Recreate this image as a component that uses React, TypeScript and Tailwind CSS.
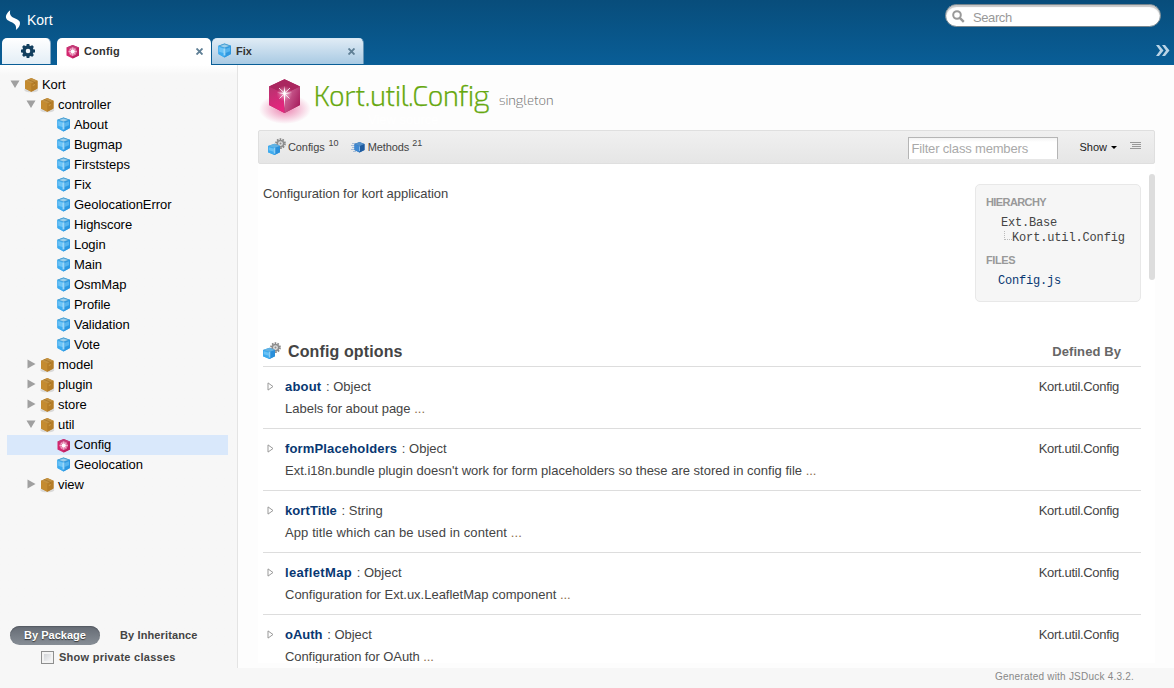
import React from "react";

function BlueCube({ className = "" }: { className?: string }) {
  return (
    <svg className={"shrink-0 " + className} width="14" height="15" viewBox="0 0 14 15">
      <path d="M6.500.6 13 2.800V11L6.500 14.400.4 11V2.800z" fill="#3aa5ea" />
      <path d="M6.500.6 13 2.800 6.500 5.200.4 2.800z" fill="#4c9fd0" />
      <path d="M6.500 1.400 11 2.900 6.500 4.500 2.200 2.900z" fill="#9ccfec" />
      <path d="M.4 2.800 6.500 5.200v9.200L.4 11z" fill="#3eacf0" />
      <path d="M1.200 4.100 6 5.800v4.400L1.200 8.800z" fill="#6cc4f7" />
      <path d="M6.500 5.200 13 2.800V11L6.500 14.400z" fill="#2f98e0" />
      <path d="M7.500 6 12 4.300v4L7.500 9.900z" fill="#56b4ee" />
      <path d="M5.600 5.400 7.400 5.200v7.400L5.600 12.600z" fill="#b5e4fb" opacity=".8" />
    </svg>
  );
}

function PinkCube() {
  return (
    <svg className="shrink-0" width="14" height="15" viewBox="0 0 14 15">
      <path d="M6.700 1 13 3.600V11.400L6.700 14.400.5 11.400V3.600z" fill="#d3266f" />
      <path d="M6.700 1 13 3.600 6.700 6.600.5 3.600z" fill="#c23a76" />
      <path d="M6.700 6.600 13 3.600v7.800L6.700 14.400z" fill="#bd2364" />
      <circle cx="6.700" cy="7.600" r="4.200" fill="#f7a9cb" opacity=".6" />
      <path d="M6.700 3.400v8.400M2.500 7.600h8.400M4.100 5l5.200 5.200M9.300 5L4.100 10.200" stroke="#fff" strokeWidth=".6" opacity=".8" />
      <circle cx="6.700" cy="7.600" r="2" fill="#fff" />
    </svg>
  );
}

function BrownBox() {
  return (
    <svg className="shrink-0" width="15" height="16" viewBox="0 0 15 16">
      <ellipse cx="7.300" cy="13" rx="7" ry="2.300" fill="#000" opacity=".12" />
      <path d="M7.300 1 13.500 3.800v7.700L7.300 14.800 1 11.500V3.800z" fill="#bd8630" />
      <path d="M7.300 1 13.500 3.800 7.300 6.600 1 3.800z" fill="#c39141" />
      <path d="M1 3.800l6.300 2.800v8.200L1 11.500z" fill="#c48b30" />
      <path d="M7.300 6.600 13.500 3.800v7.700L7.300 14.800z" fill="#b57d28" />
      <path d="M4.200 2.500 10.500 5.300v1.500" fill="none" stroke="#a27328" strokeWidth=".7" />
      <path d="M8.800 8.500l2-.9" stroke="#d8a956" strokeWidth=".8" />
    </svg>
  );
}

function ConfigIcon() {
  return (
    <svg className="shrink-0" width="18" height="18" viewBox="0 0 18 18">
      <circle cx="12.500" cy="5.600" r="4.500" fill="none" stroke="#858585" strokeWidth="1.700" strokeDasharray="1.600 1.230" />
      <circle cx="12.500" cy="5.600" r="3.200" fill="#dedede" stroke="#8c8c8c" strokeWidth="1.500" />
      <circle cx="12.500" cy="5.600" r="1" fill="#8b8b8b" />
      <path d="M0 8 6.500 5.800 12 8V14.300L6.500 17 0 14.300z" fill="#38a3e8" />
      <path d="M0 8 6.500 5.800 12 8 6.500 10z" fill="#62b2e2" />
      <path d="M0 8l6.500 2V17L0 14.300z" fill="#3fabee" />
      <path d="M.8 9.200l5 1.500v3.100L.8 12.300z" fill="#69c2f6" />
      <path d="M6.500 10 12 8V14.300L6.500 17z" fill="#2a8fda" />
      <path d="M5.800 10l1.500-.2v5.900l-1.500-.1z" fill="#a5dcf9" opacity=".8" />
    </svg>
  );
}

function MethodIcon() {
  return (
    <svg className="shrink-0" width="14" height="13" viewBox="0 0 14 13">
      <path d="M1 2.500h4M0 4.500h4M1 6.500h4M0 8.500h4M2 10.500h3" stroke="#a7bdd8" />
      <path d="M8.500 1 13.500 3v6L8.500 11.500 3.500 9V3z" fill="#2e72b9" />
      <path d="M8.500 1 13.500 3 8.500 5.200 3.500 3z" fill="#5590c9" />
      <path d="M3.500 3l5 2.200v6.300L3.500 9z" fill="#3f89d2" />
      <path d="M8.500 5.200 13.500 3v6L8.500 11.500z" fill="#205c9f" />
      <path d="M8 5.500l1-.3v4.800l-1 .2z" fill="#83b6e6" />
    </svg>
  );
}

function BigPinkCube() {
  return (
    <svg className="shrink-0" width="54" height="46" viewBox="0 0 54 46">
      <defs>
        <radialGradient id="glow"><stop offset="0" stopColor="#e0307c" stopOpacity=".6" /><stop offset="1" stopColor="#e0307c" stopOpacity="0" /></radialGradient>
        <linearGradient id="left" x1="0" y1="0" x2=".3" y2="1"><stop offset="0" stopColor="#b5336e" /><stop offset="1" stopColor="#e6257f" /></linearGradient>
        <linearGradient id="right" x1="0" y1="0" x2="1" y2=".7"><stop offset="0" stopColor="#d778a6" /><stop offset="1" stopColor="#a71c5c" /></linearGradient>
        <radialGradient id="shine"><stop offset="0" stopColor="#fff" stopOpacity=".75" /><stop offset="1" stopColor="#f49bc2" stopOpacity="0" /></radialGradient>
      </defs>
      <ellipse cx="27" cy="31" rx="26" ry="15" fill="url(#glow)" />
      <path d="M26.500 1.300 42 8.500V27L26.500 35 11 27V8.500z" fill="#b3245f" />
      <path d="M11 8.500l15.500 7.300V35L11 27z" fill="url(#left)" />
      <path d="M26.500 15.800 42 8.500V27L26.500 35z" fill="url(#right)" />
      <path d="M26.500 1.300 42 8.500l-15.500 7.300L11 8.500z" fill="#aa265f" />
      <circle cx="26.500" cy="15.500" r="8" fill="url(#shine)" />
      <path d="M26.500 8l.8 6.700h6.700l-6.700 1.400-.8 14-.8-14-6.700-1.400h6.700z" fill="#fff" />
      <path d="M21 10l5 4.700M32 10l-5 4.700M21.500 20.500l4.500-4.300M31.500 20.500l-4.500-4.300" stroke="#fff" strokeWidth=".8" />
    </svg>
  );
}

type NodeKind = "open" | "closed" | "class" | "singleton";
const tree: { label: string; depth: number; kind: NodeKind; active?: boolean }[] = [
  { label: "Kort", depth: 0, kind: "open" },
  { label: "controller", depth: 1, kind: "open" },
  { label: "About", depth: 2, kind: "class" },
  { label: "Bugmap", depth: 2, kind: "class" },
  { label: "Firststeps", depth: 2, kind: "class" },
  { label: "Fix", depth: 2, kind: "class" },
  { label: "GeolocationError", depth: 2, kind: "class" },
  { label: "Highscore", depth: 2, kind: "class" },
  { label: "Login", depth: 2, kind: "class" },
  { label: "Main", depth: 2, kind: "class" },
  { label: "OsmMap", depth: 2, kind: "class" },
  { label: "Profile", depth: 2, kind: "class" },
  { label: "Validation", depth: 2, kind: "class" },
  { label: "Vote", depth: 2, kind: "class" },
  { label: "model", depth: 1, kind: "closed" },
  { label: "plugin", depth: 1, kind: "closed" },
  { label: "store", depth: 1, kind: "closed" },
  { label: "util", depth: 1, kind: "open" },
  { label: "Config", depth: 2, kind: "singleton", active: true },
  { label: "Geolocation", depth: 2, kind: "class" },
  { label: "view", depth: 1, kind: "closed" },
];

const indents = ["pl-[3px]", "pl-[19px]", "pl-[49px]"];

function TreeRow({ label, depth, kind, active }: (typeof tree)[number]) {
  const folder = kind === "open" || kind === "closed";
  return (
    <div className={`flex h-5 items-center ${indents[depth]} ${active ? "bg-[#d9e8fb]" : ""}`}>
      {folder && (
        <svg className="-mt-[2px] mr-[4px] shrink-0" width="10" height="10" viewBox="0 0 10 10">
          <path d={kind === "open" ? "M.5 1.500h9L5 9z" : "M1.500 .5v9L9.500 5z"} fill="#a0a0a0" />
        </svg>
      )}
      {folder ? <BrownBox /> : kind === "class" ? <BlueCube className="ml-[1px] -mt-px" /> : <span className="ml-[1px]"><PinkCube /></span>}
      <span className={`${depth === 2 ? "ml-[3px]" : "ml-[3px]"} text-[13px] leading-5 tracking-[-0.050px] whitespace-nowrap text-black`}>{label}</span>
    </div>
  );
}

const members = [
  { name: "about", type: "Object", text: "Labels for about page", nameSpacing: "tracking-[0.2px]", textSpacing: "tracking-[-0.010px]" },
  { name: "formPlaceholders", type: "Object", text: "Ext.i18n.bundle plugin doesn't work for form placeholders so these are stored in config file", nameSpacing: "tracking-[0.15px]", textSpacing: "tracking-[0px]" },
  { name: "kortTitle", type: "String", text: "App title which can be used in content", nameSpacing: "tracking-[0.1px]", textSpacing: "tracking-[0.1px]" },
  { name: "leafletMap", type: "Object", text: "Configuration for Ext.ux.LeafletMap component", nameSpacing: "tracking-[0.35px]", textSpacing: "tracking-[-0.010px]" },
  { name: "oAuth", type: "Object", text: "Configuration for OAuth", nameSpacing: "tracking-[0px]", textSpacing: "tracking-[-0.080px]" },
];

function CloseMark() {
  return (
    <svg width="7" height="7" viewBox="0 0 7 7">
      <path d="M.5.5l6 6M6.500.5l-6 6" stroke="#5f7f95" strokeWidth="1.900" />
    </svg>
  );
}

export default function App() {
  return (
    <div className="flex h-[688px] w-[1174px] flex-col overflow-hidden bg-[#f7f7f7] font-['Liberation_Sans',Arial,sans-serif] text-[#444]">
      <header className="flex h-[65px] shrink-0 flex-col bg-linear-to-b from-[#084d7b] to-[#095e97]">
        <div className="flex h-[38px] items-start">
          <svg className="mt-[10px] ml-[5px]" width="16" height="21" viewBox="0 0 16 21">
            <path d="M5.200.3C1.800 3 .2 6.200 1.300 8.600c1.200 2.700 5.800 3.400 8.100 5.400 1.700 1.500 2 3.500 1.500 6 3.300-2.300 4.900-5.800 3.700-8.400-1.100-2.500-5.100-3-7.500-4.700C4.900 5.300 4.600 3 5.200.3z" fill="#fff" />
          </svg>
          <span className="mt-[11px] ml-[6px] text-[14px] leading-[18px] text-white">Kort</span>
          <div className="mt-1 mr-[13px] ml-auto flex h-[23px] w-[216px] items-center rounded-full border border-[#77868f] bg-white pl-[6px] shadow-[inset_0_2px_1px_#c8c8c8]">
            <svg className="mt-px" width="13" height="13" viewBox="0 0 13 13">
              <circle cx="5" cy="5" r="3.800" fill="none" stroke="#999" strokeWidth="2" />
              <path d="M7.800 7.800l4 4" stroke="#999" strokeWidth="2.400" />
            </svg>
            <span className="mt-[4px] ml-[8px] text-[13px] tracking-[-0.400px] text-[#999]">Search</span>
          </div>
        </div>
        <div className="flex h-[27px] items-start">
          <div className="ml-[2px] flex h-[26px] w-[49px] items-center justify-center rounded-t-[5px] border-r border-[#86a9c4] bg-linear-to-b from-white to-[#e3eef6] pl-[4px]">
            <svg width="14" height="14" viewBox="-7 -7 14 14">
              <circle r="4" fill="none" stroke="#123f5e" strokeWidth="3.400" />
              <path d="M0-7V-4M0 4V7M-7 0H-4M4 0H7M-5-5L-3-3M3 3L5 5M-5 5L-3 3M3-3L5-5" stroke="#123f5e" strokeWidth="2.800" />
            </svg>
          </div>
          <div className="ml-[6px] flex h-[27px] w-[154px] items-center rounded-t-[5px] bg-white pr-[8px] pl-[9px]">
            <PinkCube />
            <span className="ml-[4px] text-[11px] font-bold tracking-[0.2px] text-[#333]">Config</span>
            <span className="ml-auto"><CloseMark /></span>
          </div>
          <div className="ml-px flex h-[26px] w-[152px] items-center rounded-t-[5px] border-t border-r border-[#d8e8f4] border-r-[#6594b5] bg-linear-to-b from-[#dfebf5] to-[#a9cae3] pr-[8px] pl-[6px]">
            <BlueCube className="-mt-[2px]" />
            <span className="ml-[4px] text-[11px] font-bold text-[#333]">Fix</span>
            <span className="ml-auto"><CloseMark /></span>
          </div>
          <svg className="mt-[7px] mr-[4px] ml-auto" width="14" height="11" viewBox="0 0 14 11">
            <path d="M0 0h3l4.500 5.500L3 11H0l4-5.500zM6 0h3l4.500 5.500L9 11H6l4-5.500z" fill="#bad4e6" />
          </svg>
        </div>
      </header>
      <div className="flex h-[603px] shrink-0">
        <aside className="flex w-[238px] shrink-0 flex-col border-r border-[#e4e4e4] bg-linear-to-b from-white to-[#f7f7f7] to-[10px] pt-[10px]">
          <nav className="ml-[7px] w-[221px]">
            {tree.map((n, i) => <TreeRow key={i} {...n} />)}
          </nav>
          <div className="mt-[131px] ml-[10px] flex items-center text-[11px] leading-[19px] font-bold">
            <span className="h-[19px] w-[90px] rounded-full bg-linear-to-b from-[#656b74] to-[#878e96] text-center text-white shadow-[inset_0_1px_1px_#565b63] [text-shadow:0_1px_1px_#333]">By Package</span>
            <span className="ml-[20px] tracking-[0.120px]">By Inheritance</span>
          </div>
          <div className="mt-[4px] ml-[41px] flex items-center text-[11px] leading-[16px] font-bold">
            <span className="size-[13px] border border-[#8e8f8f] bg-linear-to-br from-[#c8cbcf] to-white shadow-[inset_0_0_0_2px_#f3f3f3]" />
            <span className="ml-[5px] tracking-[0.270px]">Show private classes</span>
          </div>
        </aside>
        <main className="flex flex-1 flex-col bg-[#fdfdfd] pl-[20px]">
          <div className="relative flex h-[65px]">
            <div className="mt-[13px]"><BigPinkCube /></div>
            <h1 className="mt-[14px] ml-[2px] font-['Exo','Open_Sans',sans-serif] text-[27px] leading-[36px] font-light tracking-[-0.240px] whitespace-nowrap text-[#66a80f] [-webkit-text-stroke:0.250px_#66a80f]">Kort.util.Config</h1>
            <span className="mt-[27px] ml-[10px] font-['Exo','Open_Sans',sans-serif] text-[13px] leading-[18px] font-light tracking-[-0.060px] text-[#777]">singleton</span>
            <span className="absolute top-[47px] left-[110px] text-[13px] leading-4 text-white">View source</span>
          </div>
          <div className="flex h-[34px] w-[897px] items-center rounded-[2px] border border-[#dfdfdf] bg-linear-to-b from-[#f0f0f0] to-[#e6e6e6] pl-[9px] text-[11px]">
            <ConfigIcon />
            <span className="ml-[2px] tracking-[-0.100px]">Configs</span>
            <span className="-mt-[6px] ml-[4px] text-[9px]">10</span>
            <span className="ml-[12px]"><MethodIcon /></span>
            <span className="ml-[3px] tracking-[-0.100px]">Methods</span>
            <span className="-mt-[6px] ml-[3px] text-[9px]">21</span>
            <div className="mt-[2px] mr-[21px] ml-auto h-[22px] w-[150px] border border-b-0 border-[#b5b5b5] bg-linear-to-b from-[#f3f3f3] to-white to-[4px] pl-[2px] text-[13px] leading-[22px] tracking-[-0.170px] whitespace-nowrap text-[#a9a9a9]">Filter class members</div>
            <span className="text-[#222]">Show</span>
            <svg className="mt-px ml-[4px]" width="6" height="3" viewBox="0 0 6 3"><path d="M0 0h6L3 3z" fill="#000" /></svg>
            <svg className="-mt-[3px] mr-[12px] ml-[13px]" width="12" height="7" viewBox="0 0 12 7">
              <path d="M0 .5h11M2 2.500h9M2 4.500h9M0 6.500h11" stroke="#999" />
            </svg>
          </div>
          <div className="flex h-[499px] w-[897px] overflow-hidden bg-white pl-[5px]">
            <div className="w-[878px] shrink-0">
              <div className="flex h-[166px] justify-between pt-[20px]">
                <p className="text-[13px] leading-[20px] tracking-[-0.060px]">Configuration for kort application</p>
                <div className="flex h-[118px] w-[166px] flex-col rounded-[5px] border border-[#e8e8e8] bg-[#f6f6f6] pl-[10px]">
                  <h4 className="mt-[10px] text-[11px] leading-[15px] font-bold tracking-[-0.600px] text-[#999]">HIERARCHY</h4>
                  <div className="mt-[6px] ml-[15px] font-['Courier_New','Liberation_Mono',monospace] text-[12px] leading-[15px] tracking-[-0.200px]">Ext.Base</div>
                  <div className="ml-[18px] flex font-['Courier_New','Liberation_Mono',monospace] text-[12px] leading-[15px] tracking-[-0.150px] whitespace-nowrap">
                    <span className="h-[9px] w-[8px] border-b border-l border-dotted border-[#bbb]" />
                    Kort.util.Config
                  </div>
                  <h4 className="mt-[7px] text-[11px] leading-[15px] font-bold tracking-[-0.400px] text-[#999]">FILES</h4>
                  <div className="mt-[6px] ml-[12px] font-['Courier_New','Liberation_Mono',monospace] text-[12px] leading-[15px] tracking-[-0.200px] text-[#083772]">Config.js</div>
                </div>
              </div>
              <div className="flex h-[37px] items-center border-b border-[#ddd] pt-[7px] pr-[20px]">
                <span className="-mt-[2px]"><ConfigIcon /></span>
                <h3 className="ml-[7px] text-[16px] leading-[20px] font-bold tracking-[0.120px]">Config options</h3>
                <span className="ml-auto text-[13px] font-bold tracking-[0.090px] text-[#666]">Defined By</span>
              </div>
              {members.map((m) => (
                <section key={m.name} className="flex h-[62px] border-b border-[#ddd] pt-[9px] text-[13px]">
                  <svg className="mt-[6px] ml-[4px]" width="8" height="9" viewBox="0 0 8 9"><path d="M1 .9v7.200L6 4.500z" fill="#fff" stroke="#999" /></svg>
                  <div className="ml-[10px] leading-[22px] whitespace-nowrap">
                    <div><b className={`text-[#083772] ${m.nameSpacing}`}>{m.name}</b><span className="ml-px"> : {m.type}</span></div>
                    <div className={m.textSpacing}>{m.text} <span className="text-[#8a6d4a]">...</span></div>
                  </div>
                  <span className="mr-[22px] ml-auto leading-[22px] tracking-[-0.310px]">Kort.util.Config</span>
                </section>
              ))}
            </div>
            <div className="mt-[10px] ml-[8px] h-[106px] w-[6px] rounded-[3px] bg-[#ddd]" />
          </div>
        </main>
      </div>
      <footer className="flex h-5 items-center justify-end pr-[40px] pb-[3px] text-[10px] tracking-[0.220px] text-[#888]">Generated with JSDuck 4.3.2.</footer>
    </div>
  );
}
